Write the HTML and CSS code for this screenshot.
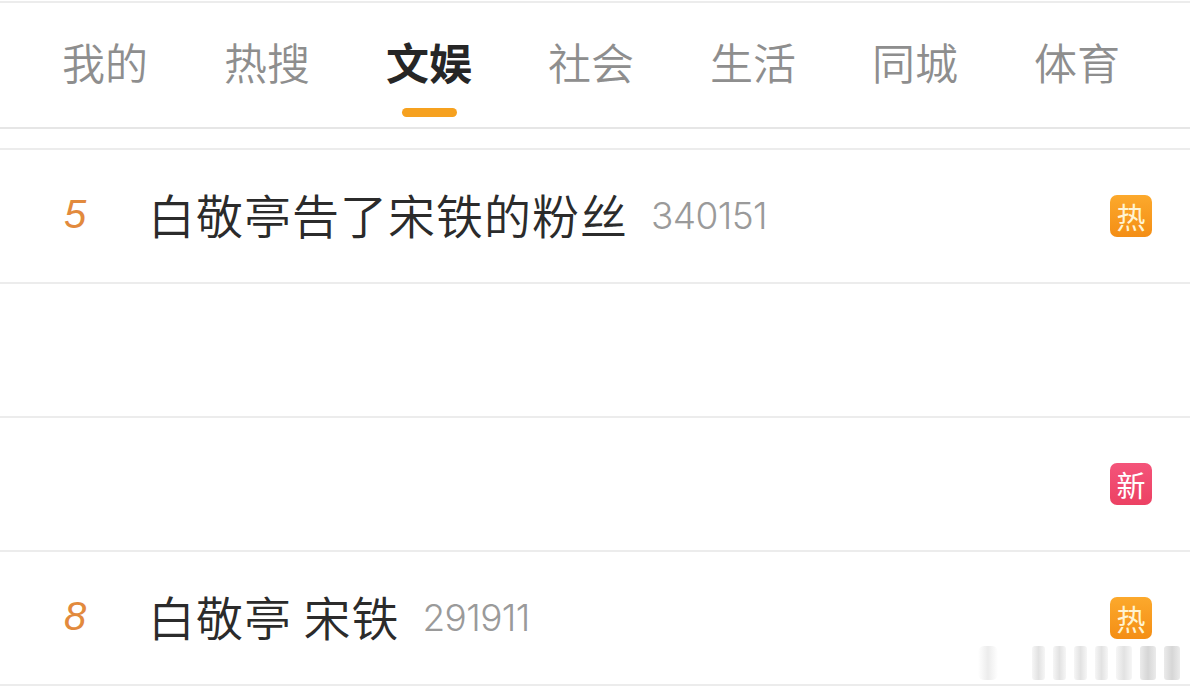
FILE: index.html
```html
<!DOCTYPE html>
<html lang="zh-CN">
<head>
<meta charset="utf-8">
<title>文娱热搜</title>
<link rel="stylesheet" href="styles.css">
</head>
<body>
<div class="page">
  <header class="tabs">
    <div class="tab"><span class="tab-label">我的</span></div>
    <div class="tab"><span class="tab-label">热搜</span></div>
    <div class="tab active"><span class="tab-label">文娱</span><span class="tab-bar"></span></div>
    <div class="tab"><span class="tab-label">社会</span></div>
    <div class="tab"><span class="tab-label">生活</span></div>
    <div class="tab"><span class="tab-label">同城</span></div>
    <div class="tab"><span class="tab-label">体育</span></div>
  </header>
  <div class="spacer"></div>
  <ul class="list">
    <li class="row">
      <span class="rank">5</span>
      <span class="title">白敬亭告了宋铁的粉丝</span>
      <span class="count">340151</span>
      <span class="badge hot">热</span>
    </li>
    <li class="row"></li>
    <li class="row">
      <span class="rank"></span>
      <span class="title"></span>
      <span class="badge new">新</span>
    </li>
    <li class="row">
      <span class="rank">8</span>
      <span class="title">白敬亭 宋铁</span>
      <span class="count">291911</span>
      <span class="badge hot">热</span>
      <div class="watermark">
        <i class="wm w1"></i><i class="wm"></i><i class="wm"></i><i class="wm"></i><i class="wm"></i><i class="wm w6"></i><i class="wm w7"></i><i class="wm w8"></i>
      </div>
    </li>
  </ul>
</div>
</body>
</html>
```

FILE: styles.css
```css
* { box-sizing: border-box; }
html, body {
  margin: 0;
  padding: 0;
  background: #ffffff;
}
body {
  font-family: "Noto Sans CJK SC", "Noto Sans", sans-serif;
  color: #333333;
}
.page {
  width: 1190px;
  padding-top: 1px;
}
.tabs {
  display: flex;
  height: 128px;
  padding-left: 24px;
  border-top: 2px solid #ececec;
  border-bottom: 2px solid #e6e6e6;
}
.tab {
  width: 162px;
  display: flex;
  flex-direction: column;
  align-items: center;
  padding-top: 33px;
}
.tab-label {
  font-size: 43px;
  line-height: 50px;
  color: #8e8e8e;
  font-weight: 350;
}
.tab.active .tab-label {
  color: #262626;
  font-weight: 700;
}
.tab-bar {
  width: 55px;
  height: 9px;
  margin-top: 22px;
  border-radius: 5px;
  background: #f6a11f;
}
.spacer {
  height: 19px;
}
.list {
  list-style: none;
  margin: 0;
  padding: 0;
  border-top: 2px solid #ececec;
}
.row {
  position: relative;
  display: flex;
  align-items: center;
  height: 134px;
  padding-left: 64px;
  padding-right: 38px;
  padding-bottom: 4px;
  border-bottom: 2px solid #ececec;
}
.rank {
  width: 84px;
  font-family: "Liberation Sans", Arial, sans-serif;
  font-style: italic;
  font-size: 40px;
  color: #e28a3d;
}
.title {
  font-size: 47px;
  line-height: 60px;
  color: #2b2b2b;
  font-weight: 350;
  letter-spacing: 1px;
}
.count {
  margin-left: 23px;
  margin-top: 2px;
  font-family: "Inter", "Roboto", sans-serif;
  font-size: 37px;
  color: #9a9a9a;
  font-weight: 300;
  letter-spacing: -0.6px;
}
.badge {
  margin-left: auto;
  width: 42px;
  height: 42px;
  border-radius: 7px;
  display: flex;
  align-items: center;
  justify-content: center;
  font-size: 29px;
  line-height: 1;
  color: #fff4d2;
}
.row .badge { margin-top: 4px; }
.badge.hot {
  background: linear-gradient(180deg, #fca92c 0%, #f48e15 100%);
}
.badge.new {
  background: linear-gradient(180deg, #f4547a 0%, #ec4163 100%);
  color: #ffffff;
}
.watermark {
  position: absolute;
  right: 10px;
  bottom: 4px;
  display: flex;
  gap: 8px;
  align-items: flex-end;
}
.wm {
  display: block;
  width: 13px;
  height: 34px;
  border-radius: 3px;
  background: linear-gradient(90deg, #f6f6f6, #e2e2e2, #f6f6f6);
}
.wm.w1 { width: 20px; margin-right: 26px; border-radius: 6px; background: linear-gradient(90deg, #ffffff, #ececec, #ffffff); }
.wm.w6 { width: 16px; }
.wm.w7, .wm.w8 { width: 16px; background: linear-gradient(90deg, #ebebeb, #d6d6d6, #ebebeb); }
```
